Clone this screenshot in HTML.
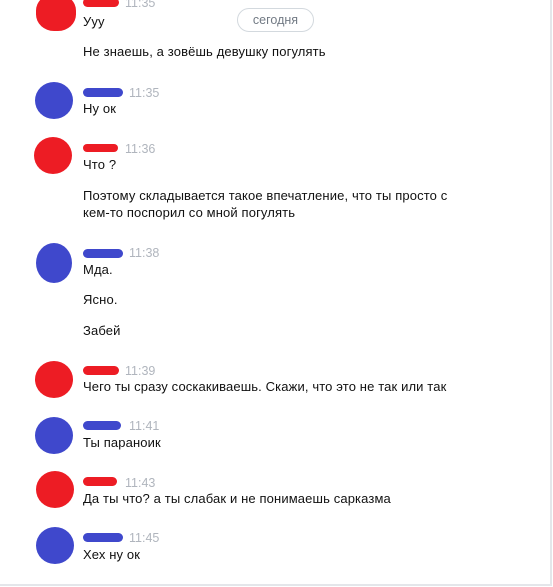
<!DOCTYPE html>
<html><head><meta charset="utf-8"><style>
body{margin:0;width:553px;height:587px;overflow:hidden;background:#fff;font-family:"Liberation Sans",Arial,sans-serif;position:relative}
.frame{position:absolute;left:0;top:-2px;width:550px;height:586px;border-right:2px solid #e4e6ea;border-bottom:2px solid #e4e6ea}
.av{position:absolute;width:38px;height:37px;border-radius:50%}
.r{background:#ed1c24}.b{background:#3f48cc}
.nm{position:absolute;height:9px;border-radius:5px}
.t{position:absolute;font-size:12.5px;color:#b0b5bd;line-height:14px}
.m{position:absolute;left:83px;font-size:13px;letter-spacing:0.13px;color:#111;line-height:16px;white-space:nowrap}
.pill{position:absolute;left:237px;top:8px;width:75px;height:22px;border:1px solid #d3d9de;border-radius:12px;text-align:center;font-size:12.5px;line-height:22px;color:#727a84}
</style></head><body>
<div class="frame"></div>
<div class="av r" style="left:36px;top:-6px;width:40px;height:37px;border-radius:45%"></div>
<div class="nm r" style="left:83px;top:-2px;width:36px;height:9px"></div>
<div class="t" style="left:125px;top:-4px">11:35</div>
<div class="m" style="top:14px">Ууу</div>
<div class="pill">сегодня</div>
<div class="m" style="top:44px">Не знаешь, а зовёшь девушку погулять</div>

<div class="av b" style="left:35px;top:82px"></div>
<div class="nm b" style="left:83px;top:88px;width:40px"></div>
<div class="t" style="left:129px;top:86px">11:35</div>
<div class="m" style="top:101px">Ну ок</div>

<div class="av r" style="left:34px;top:137px"></div>
<div class="nm r" style="left:83px;top:144px;width:35px;height:8px"></div>
<div class="t" style="left:125px;top:142px">11:36</div>
<div class="m" style="top:157px">Что ?</div>
<div class="m" style="top:188px">Поэтому складывается такое впечатление, что ты просто с</div>
<div class="m" style="top:205px">кем-то поспорил со мной погулять</div>

<div class="av b" style="left:36px;top:243px;width:36px;height:40px"></div>
<div class="nm b" style="left:83px;top:249px;width:40px"></div>
<div class="t" style="left:129px;top:246px">11:38</div>
<div class="m" style="top:262px">Мда.</div>
<div class="m" style="top:292px">Ясно.</div>
<div class="m" style="top:323px">Забей</div>

<div class="av r" style="left:35px;top:361px"></div>
<div class="nm r" style="left:83px;top:366px;width:36px"></div>
<div class="t" style="left:125px;top:364px">11:39</div>
<div class="m" style="top:379px">Чего ты сразу соскакиваешь. Скажи, что это не так или так</div>

<div class="av b" style="left:35px;top:417px"></div>
<div class="nm b" style="left:83px;top:421px;width:38px"></div>
<div class="t" style="left:129px;top:419px">11:41</div>
<div class="m" style="top:435px">Ты параноик</div>

<div class="av r" style="left:36px;top:471px"></div>
<div class="nm r" style="left:83px;top:477px;width:34px"></div>
<div class="t" style="left:125px;top:476px">11:43</div>
<div class="m" style="top:491px">Да ты что? а ты слабак и не понимаешь сарказма</div>

<div class="av b" style="left:36px;top:527px"></div>
<div class="nm b" style="left:83px;top:533px;width:40px"></div>
<div class="t" style="left:129px;top:531px">11:45</div>
<div class="m" style="top:547px">Хех ну ок</div>
</body></html>
